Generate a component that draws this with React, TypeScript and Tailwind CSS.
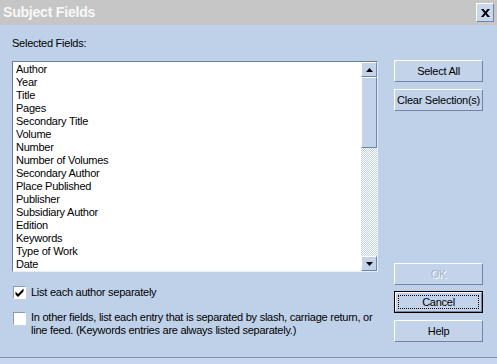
import React from "react";

const items = [
  "Author",
  "Year",
  "Title",
  "Pages",
  "Secondary Title",
  "Volume",
  "Number",
  "Number of Volumes",
  "Secondary Author",
  "Place Published",
  "Publisher",
  "Subsidiary Author",
  "Edition",
  "Keywords",
  "Type of Work",
  "Date",
];

function Btn({ children, def, disabled }: { children: React.ReactNode; def?: boolean; disabled?: boolean }) {
  if (def) {
    return (
      <div className="h-[22px] w-[89px] border border-black">
        <div className="h-full w-full border-t border-l border-t-white border-l-white border-b border-r border-b-[#6f84a6] border-r-[#6f84a6] bg-[#c2d3ea] p-[2px]">
          <div className="flex h-full w-full items-center justify-center border border-dotted border-black leading-none">
            {children}
          </div>
        </div>
      </div>
    );
  }
  return (
    <div
      className={
        "flex h-[22px] w-[89px] items-center justify-center border-t border-l border-t-white border-l-white border-b border-r border-b-[#6f84a6] border-r-[#6f84a6] bg-[#c2d3ea] leading-none " +
        (disabled ? "text-[#a6b4c8] [text-shadow:1px_1px_0_#ffffff]" : "text-black")
      }
    >
      {children}
    </div>
  );
}

function ScrollBtn({ up }: { up?: boolean }) {
  return (
    <div className="flex h-[15px] w-[16px] items-center justify-center border-t border-l border-t-white border-l-white border-b border-r border-b-[#6f84a6] border-r-[#6f84a6] bg-[#c2d3ea]">
      <svg width="7" height="4" viewBox="0 0 7 4">
        {up ? <path d="M3.5 0 L7 4 L0 4 Z" fill="#000" /> : <path d="M0 0 L7 0 L3.5 4 Z" fill="#000" />}
      </svg>
    </div>
  );
}

function Check({ checked }: { checked?: boolean }) {
  return (
    <div className="flex h-[13px] w-[13px] shrink-0 items-center justify-center border-t border-l border-t-[#8a9ab3] border-l-[#8a9ab3] border-b border-r border-b-white border-r-white bg-white">
      {checked && (
        <svg width="9" height="9" viewBox="0 0 9 9">
          <path d="M0.5 3.5 L3 6 L8.5 0.5 L8.5 3.5 L3 9 L0.5 6.5 Z" fill="#000" />
        </svg>
      )}
    </div>
  );
}

export default function App() {
  return (
    <div
      className="relative flex h-[364px] w-[497px] flex-col overflow-hidden bg-[#bfd1e9] text-[11px] tracking-[-0.25px] text-black"
      style={{ fontFamily: '"Liberation Sans", Arial, sans-serif' }}
    >
      {/* Title bar */}
      <div className="flex h-[25px] shrink-0 items-center justify-between bg-[#c6c6c6] pl-[3px] pr-[3px]">
        <span className="text-[14px] font-bold tracking-[-0.2px] text-[#f8f8f8]">Subject Fields</span>
        <div className="flex h-[19px] w-[18px] items-center justify-center border-t border-l border-t-white border-l-white border-b border-r border-b-[#6f84a6] border-r-[#6f84a6] bg-[#c9d7ec]">
          <svg width="9" height="8" viewBox="0 0 9 8">
            <path d="M0 0 H2.5 L4.5 2.5 L6.5 0 H9 L5.8 4 L9 8 H6.5 L4.5 5.5 L2.5 8 H0 L3.2 4 Z" fill="#000" />
          </svg>
        </div>
      </div>

      {/* Body */}
      <div className="flex h-[332px] shrink-0 pl-[12px]">
        {/* Left column */}
        <div className="flex w-[366px] flex-col">
          <div className="mt-[12px] h-[13px] leading-[13px]">Selected Fields:</div>
          <div className="mt-[11px] flex h-[211px] border-t border-l border-t-[#6b7d98] border-l-[#6b7d98] border-b border-r border-b-[#e6eef9] border-r-[#e6eef9] bg-white">
            <div className="flex-1 overflow-hidden pl-[3px] pt-[1px]">
              {items.map((it) => (
                <div key={it} className="h-[13px] leading-[13px] whitespace-nowrap">
                  {it}
                </div>
              ))}
            </div>
            <div className="flex w-[16px] flex-col">
              <ScrollBtn up />
              <div className="h-[71px] border-t border-l border-t-white border-l-white border-b border-r border-b-[#6f84a6] border-r-[#6f84a6] bg-[#c2d3ea]" />
              <div className="flex-1 bg-[conic-gradient(#ffffff_25%,#bfd1e9_0_50%,#ffffff_0_75%,#bfd1e9_0)] bg-[length:2px_2px]" />
              <ScrollBtn />
            </div>
          </div>
          <div className="mt-[14px] flex items-center gap-[5px] pl-[1px]">
            <Check checked />
            <span className="leading-[13px]">List each author separately</span>
          </div>
          <div className="mt-[13px] flex items-start gap-[5px] pl-[1px]">
            <Check />
            <span className="-mt-[1px] leading-[13px]">
              In other fields, list each entry that is separated by slash, carriage return, or
              <br />
              line feed. (Keywords entries are always listed separately.)
            </span>
          </div>
        </div>

        {/* Right column */}
        <div className="ml-[16px] flex flex-col">
          <div className="mt-[35px]">
            <Btn>Select All</Btn>
          </div>
          <div className="mt-[7px]">
            <Btn>Clear Selection(s)</Btn>
          </div>
          <div className="mt-[152px]">
            <Btn disabled>OK</Btn>
          </div>
          <div className="mt-[6px]">
            <Btn def>Cancel</Btn>
          </div>
          <div className="mt-[7px]">
            <Btn>Help</Btn>
          </div>
        </div>
      </div>

      {/* Bottom edge */}
      <div className="flex-1 border-t border-t-[#7b8fae] bg-[#c8d7ed]" />
    </div>
  );
}
